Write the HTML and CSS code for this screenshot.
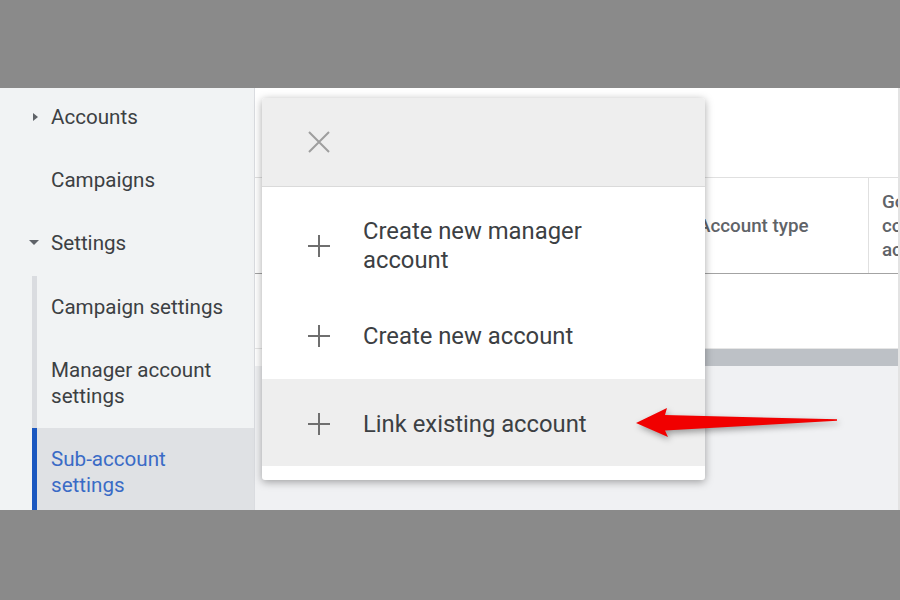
FILE: index.html
```html
<!DOCTYPE html>
<html>
<head>
<meta charset="utf-8">
<link rel="stylesheet" href="styles.css">
</head>
<body>
<div class="frame">
  <nav class="sidebar">
    <div class="nav-item first"><span class="caret-slot"><span class="caret-right"></span></span>Accounts</div>
    <div class="nav-item"><span class="caret-slot"></span>Campaigns</div>
    <div class="nav-item"><span class="caret-slot"><span class="caret-down"></span></span>Settings</div>
    <div class="sub-list">
      <div class="sub-item first">Campaign settings</div>
      <div class="sub-item tall">Manager account<br>settings</div>
      <div class="sub-item selected">Sub-account<br>settings</div>
    </div>
  </nav>
  <main class="main">
    <div class="toolbar"></div>
    <div class="table-head">
      <div class="th-spacer"></div>
      <div class="th">Account type</div>
      <div class="th th-last"><div class="th-clip">Google conversion account</div></div>
    </div>
    <div class="table-row"></div>
    <div class="scroll-bar"></div>
    <div class="footer-area"></div>
  </main>

  <div class="menu">
    <div class="menu-head">
      <svg class="icon" width="22" height="22" viewBox="0 0 22 22"><path d="M1 1 L21 21 M21 1 L1 21" stroke="#9e9e9e" stroke-width="2" fill="none"/></svg>
    </div>
    <div class="menu-item first">
      <svg class="icon" width="22" height="22" viewBox="0 0 22 22"><path d="M11 0 V22 M0 11 H22" stroke="#6f6f6f" stroke-width="2" fill="none"/></svg>
      <span class="menu-label">Create new manager<br>account</span>
    </div>
    <div class="menu-item">
      <svg class="icon" width="22" height="22" viewBox="0 0 22 22"><path d="M11 0 V22 M0 11 H22" stroke="#6f6f6f" stroke-width="2" fill="none"/></svg>
      <span class="menu-label">Create new account</span>
    </div>
    <div class="menu-item hover">
      <svg class="icon" width="22" height="22" viewBox="0 0 22 22"><path d="M11 0 V22 M0 11 H22" stroke="#6f6f6f" stroke-width="2" fill="none"/></svg>
      <span class="menu-label">Link existing account</span>
    </div>
  </div>

  <svg class="arrow" width="215" height="50" viewBox="0 0 215 50">
    <polygon points="6,23 37,8 35,15 207,19.3 207,20.8 35,30.5 38,37" fill="#f10000"/>
  </svg>
</div>
</body>
</html>
```

FILE: styles.css
```css
html, body {
  margin: 0;
  padding: 0;
}

body {
  background: #8a8a8a;
  height: 600px;
  font-family: Roboto, "Liberation Sans", Arial, sans-serif;
}

.frame {
  position: relative;
  margin-top: 88px;
  height: 422px;
  display: flex;
  overflow: hidden;
}

/* Sidebar */
.sidebar {
  width: 254px;
  flex-shrink: 0;
  background: #f1f3f4;
  border-right: 1px solid #dadce0;
  font-size: 20.6px;
  color: #3c4043;
}

.nav-item {
  height: 63px;
  display: flex;
  align-items: center;
  padding-left: 29px;
}

.nav-item.first {
  height: 58px;
}

.nav-item.first + .nav-item {
  height: 65px;
  padding-top: 2px;
  box-sizing: border-box;
}

.caret-slot {
  width: 22px;
  display: flex;
  align-items: center;
}

.caret-right {
  margin-left: 4px;
  width: 0;
  height: 0;
  border-left: 5px solid #5f6368;
  border-top: 4.5px solid transparent;
  border-bottom: 4.5px solid transparent;
}

.caret-down {
  width: 0;
  height: 0;
  border-top: 5px solid #5f6368;
  border-left: 5.5px solid transparent;
  border-right: 5.5px solid transparent;
}

.sub-list {
  margin-top: 2px;
}

.sub-item {
  margin-left: 32px;
  border-left: 5px solid #dadce0;
  padding-left: 14px;
  display: flex;
  align-items: center;
  line-height: 26px;
  height: 90px;
  box-sizing: border-box;
}

.sub-item.first {
  height: 62px;
}

.sub-item.selected {
  border-left-color: #1a57c0;
  background: #dfe1e4;
  color: #3a6bc6;
  height: 87px;
}

/* Main */
.main {
  flex: 1;
  display: flex;
  flex-direction: column;
  background: #fff;
  border-right: 2px solid #e3e3e3;
}

.toolbar {
  height: 89px;
}

.table-head {
  height: 97px;
  box-sizing: border-box;
  border-top: 1px solid #e0e0e0;
  border-bottom: 1px solid #a3a3a3;
  display: grid;
  grid-template-columns: 1fr 170px 30px;
  font-size: 18.8px;
  font-weight: 500;
  color: #5f6368;
}

.th {
  display: flex;
  align-items: center;
  padding-left: 0;
}

.th-last {
  border-left: 1px solid #e0e0e0;
  padding-left: 13px;
  overflow: hidden;
}

.th-clip {
  width: 100px;
  flex-shrink: 0;
  line-height: 24px;
}

.table-row {
  height: 75px;
  box-sizing: border-box;
  border-bottom: 1px solid #e6e6e6;
}

.scroll-bar {
  height: 17px;
  margin-left: 8px;
  background: #bdc1c6;
}

.footer-area {
  flex: 1;
  background: #f0f1f3;
}

/* Menu overlay */
.menu {
  position: absolute;
  left: 262px;
  top: 10px;
  width: 443px;
  height: 382px;
  background: #fff;
  border-radius: 3px;
  box-shadow: 0 2px 8px rgba(0, 0, 0, 0.35);
  overflow: hidden;
  font-size: 23.8px;
  color: #3c4043;
}

.menu-head {
  height: 89px;
  box-sizing: border-box;
  background: #eeeeee;
  border-bottom: 1px solid #dadada;
  display: flex;
  align-items: center;
  padding-left: 46px;
}

.menu-item {
  height: 88px;
  box-sizing: border-box;
  display: flex;
  align-items: center;
  gap: 33px;
  padding-left: 46px;
  padding-top: 2px;
  line-height: 29px;
}

.menu-item.first {
  height: 104px;
  padding-top: 14px;
}

.menu-item.hover {
  background: #eeeeee;
  height: 87px;
  padding-top: 3px;
}

.icon {
  flex-shrink: 0;
  display: block;
}

/* Annotation arrow */
.arrow {
  position: absolute;
  left: 630px;
  top: 312px;
  filter: drop-shadow(2px 3px 3px rgba(0, 0, 0, 0.35));
}
```
